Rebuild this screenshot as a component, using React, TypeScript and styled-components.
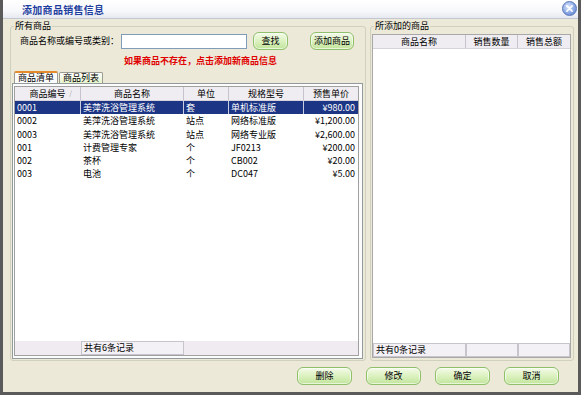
import React from "react";
import styled, { createGlobalStyle } from "styled-components";

const Global = createGlobalStyle`
  html, body { margin: 0; padding: 0; background: #fff; }
  * { box-sizing: border-box; }
  body { font-family: "Noto Sans CJK SC", "Liberation Sans", sans-serif; font-size: 9px; color: #000; }
`;

const Window = styled.div`
  width: 581px;
  height: 395px;
  background: #ECE9D8;
  border-left: 3px solid #5a5a5a;
  border-right: 3px solid #5a5a5a;
  border-bottom: 3px solid #5a5a5a;
  display: flex;
  flex-direction: column;
`;

const TitleBar = styled.div`
  height: 19px;
  flex: none;
  background: linear-gradient(to bottom, #ffffff 0%, #f7f8fb 60%, #e6e9f0 100%);
  border-bottom: 1px solid #c4c7cf;
  display: flex;
  align-items: flex-start;
  justify-content: space-between;
  padding: 1px 1px 0 19px;
`;

const Title = styled.div`
  color: #1f3f9f;
  font-weight: bold;
  font-size: 10px;
  letter-spacing: 0.3px;
  line-height: 17px;
`;

const CloseBtn = styled.div`
  width: 15px;
  height: 15px;
  border-radius: 50%;
  background: radial-gradient(circle at 40% 35%, #dbe7ff 0%, #8aa8e4 55%, #5275c4 100%);
  border: 1px solid #5875b8;
  display: flex;
  align-items: center;
  justify-content: center;
`;

const Body = styled.div`
  flex: 1;
  display: flex;
  flex-direction: column;
  padding: 2px 5px 0 7px;
`;

const Groups = styled.div`
  display: flex;
  gap: 4px;
  height: 340px;
`;

const Group = styled.fieldset<{ $w: number }>`
  width: ${(p) => p.$w}px;
  flex: none;
  margin: 0;
  padding: 0 2px 1px 1px;
  border: 1px solid #d0d0bf;
  border-radius: 3px;
  display: flex;
  flex-direction: column;
  min-width: 0;
`;

const Legend = styled.legend`
  padding: 0 1px;
  margin-left: 2px;
  font-size: 9px;
  line-height: 10px;
  height: 10px;
`;

const SearchRow = styled.div`
  display: flex;
  align-items: center;
  height: 18px;
  margin-top: 1px;
  padding-left: 8px;
`;

const Label = styled.span`
  width: 101px;
  white-space: nowrap;
  line-height: 12px;
`;

const TextInput = styled.div`
  width: 126px;
  height: 15px;
  background: #fff;
  border: 1px solid #7f9db9;
`;

const GreenBtn = styled.div<{ $w: number; $ml?: number }>`
  width: ${(p) => p.$w}px;
  height: 18px;
  flex: none;
  margin-left: ${(p) => p.$ml ?? 0}px;
  border: 1px solid #8fbf6a;
  border-radius: 6px;
  background: linear-gradient(to bottom, #f4fbe9 0%, #def2c3 45%, #c2e59c 100%);
  box-shadow: inset 0 0 0 1px rgba(255,255,255,0.6);
  display: flex;
  align-items: center;
  justify-content: center;
  font-size: 9px;
  line-height: 12px;
  white-space: nowrap;
`;

const Hint = styled.div`
  color: #e00000;
  font-weight: bold;
  text-align: center;
  margin-top: 5px;
  height: 12px;
  line-height: 12px;
  padding-left: 26px;
  white-space: nowrap;
`;

const Tabs = styled.div`
  display: flex;
  align-items: flex-end;
  margin-top: 4px;
  height: 12px;
  padding-left: 2px;
`;

const Tab = styled.div<{ $active?: boolean }>`
  height: ${(p) => (p.$active ? 12 : 11)}px;
  padding: 0 3px;
  line-height: 10px;
  font-size: 9px;
  white-space: nowrap;
  border: 1px solid #9c9b91;
  border-bottom: none;
  border-top: ${(p) => (p.$active ? "2px solid #e68b2c" : "1px solid #9c9b91")};
  background: ${(p) => (p.$active ? "#fcfcfe" : "linear-gradient(#fefefe, #e6f4cc)")};
  border-radius: 2px 2px 0 0;
  margin-right: 1px;
`;

const Panel = styled.div`
  flex: 1;
  border: 1px solid #919b9c;
  background: #fcfcfe;
  padding: 1px 3px 2px 1px;
  display: flex;
  flex-direction: column;
`;

const Grid = styled.div`
  flex: 1;
  border: 1px solid #a0a0a0;
  background: #fff;
  display: flex;
  flex-direction: column;
  margin-top: 1px;
`;

const HeaderRow = styled.div`
  display: flex;
  height: 14px;
  background: #efedf2;
  border-bottom: 1px solid #d6d3dc;
  flex: none;
`;

const HeadCell = styled.div<{ $w: number }>`
  width: ${(p) => p.$w}px;
  flex: none;
  text-align: center;
  line-height: 13px;
  border-right: 1px solid #c6c3cc;
  position: relative;
  white-space: nowrap;
  &:last-child { border-right: none; flex: 1; }
`;

const SortMark = styled.span`
  position: absolute;
  right: 8px;
  top: 0;
  color: #a8a8a8;
  font-size: 7px;
`;

const Rows = styled.div`
  flex: 1;
  background: #fff;
`;

const Row = styled.div<{ $sel?: boolean }>`
  display: flex;
  height: 13.3px;
  background: ${(p) => (p.$sel ? "#1c3585" : "transparent")};
  color: ${(p) => (p.$sel ? "#fff" : "#000")};
`;

const Cell = styled.div<{ $w: number; $right?: boolean; $sel?: boolean }>`
  width: ${(p) => p.$w}px;
  flex: none;
  padding: 0 3px 0 2px;
  line-height: 13px;
  font-size: 9px;
  white-space: nowrap;
  overflow: hidden;
  text-align: ${(p) => (p.$right ? "right" : "left")};
  border-right: ${(p) => (p.$sel ? "1px solid #c9cfe0" : "1px solid transparent")};
  &:last-child { flex: 1; border-right: none; }
`;

const Footer = styled.div`
  display: flex;
  height: 15px;
  background: #efebf0;
  border-top: 1px solid #fff;
  flex: none;
`;

const FootCell = styled.div<{ $w: number; $boxed?: boolean }>`
  width: ${(p) => p.$w}px;
  flex: none;
  line-height: 12px;
  font-size: 9px;
  padding-left: 2px;
  white-space: nowrap;
  border: ${(p) => (p.$boxed ? "1px solid #c8c4cc" : "1px solid transparent")};
  background: ${(p) => (p.$boxed ? "#f3f1f5" : "transparent")};
  &:last-child { flex: 1; }
`;

const RightGrid = styled.div`
  flex: 1;
  margin: 3px 0 1px 0;
  border: 1px solid #a8a8a8;
  display: flex;
  flex-direction: column;
  background: #fff;
`;

const Buttons = styled.div`
  display: flex;
  justify-content: flex-end;
  gap: 14px;
  padding: 6px 14px 0 0;
`;

const CloseIcon = () => (
  <svg width="7" height="7" viewBox="0 0 8 8">
    <path d="M1 1 L7 7 M7 1 L1 7" stroke="#fff" strokeWidth="1.8" strokeLinecap="round" />
  </svg>
);

const leftCols = [66, 103, 45, 75, 55];
const leftHead = ["商品编号", "商品名称", "单位", "规格型号", "预售单价"];
const data = [
  ["0001", "美萍洗浴管理系统", "套", "单机标准版", "¥980.00"],
  ["0002", "美萍洗浴管理系统", "站点", "网络标准版", "¥1,200.00"],
  ["0003", "美萍洗浴管理系统", "站点", "网络专业版", "¥2,600.00"],
  ["001", "计费管理专家", "个", "JF0213", "¥200.00"],
  ["002", "茶杯", "个", "CB002", "¥20.00"],
  ["003", "电池", "个", "DC047", "¥5.00"],
];

const rightCols = [93, 52, 51];
const rightHead = ["商品名称", "销售数量", "销售总额"];

export default function App() {
  return (
    <>
      <Global />
      <Window>
        <TitleBar>
          <Title>添加商品销售信息</Title>
          <CloseBtn><CloseIcon /></CloseBtn>
        </TitleBar>
        <Body>
          <Groups>
            <Group $w={356}>
              <Legend>所有商品</Legend>
              <SearchRow>
                <Label>商品名称或编号或类别：</Label>
                <TextInput />
                <GreenBtn $w={35} $ml={6}>查找</GreenBtn>
                <GreenBtn $w={44} $ml={22}>添加商品</GreenBtn>
              </SearchRow>
              <Hint>如果商品不存在，点击添加新商品信息</Hint>
              <Tabs>
                <Tab $active>商品清单</Tab>
                <Tab>商品列表</Tab>
              </Tabs>
              <Panel>
                <Grid>
                  <HeaderRow>
                    {leftHead.map((h, i) => (
                      <HeadCell key={h} $w={leftCols[i]}>
                        {h}
                        {i === 0 && <SortMark>/</SortMark>}
                      </HeadCell>
                    ))}
                  </HeaderRow>
                  <Rows>
                    {data.map((r, ri) => (
                      <Row key={ri} $sel={ri === 0}>
                        {r.map((c, ci) => (
                          <Cell key={ci} $w={leftCols[ci]} $right={ci === 4} $sel={ri === 0}>
                            {c}
                          </Cell>
                        ))}
                      </Row>
                    ))}
                  </Rows>
                  <Footer>
                    <FootCell $w={66} />
                    <FootCell $w={103} $boxed>共有6条记录</FootCell>
                    <FootCell $w={100} />
                  </Footer>
                </Grid>
              </Panel>
            </Group>
            <Group $w={204}>
              <Legend>所添加的商品</Legend>
              <RightGrid>
                <HeaderRow>
                  {rightHead.map((h, i) => (
                    <HeadCell key={h} $w={rightCols[i]}>{h}</HeadCell>
                  ))}
                </HeaderRow>
                <Rows />
                <Footer>
                  <FootCell $w={93} $boxed>共有0条记录</FootCell>
                  <FootCell $w={52} $boxed />
                  <FootCell $w={51} $boxed />
                </Footer>
              </RightGrid>
            </Group>
          </Groups>
          <Buttons>
            <GreenBtn $w={55}>删除</GreenBtn>
            <GreenBtn $w={55}>修改</GreenBtn>
            <GreenBtn $w={55}>确定</GreenBtn>
            <GreenBtn $w={55}>取消</GreenBtn>
          </Buttons>
        </Body>
      </Window>
    </>
  );
}
